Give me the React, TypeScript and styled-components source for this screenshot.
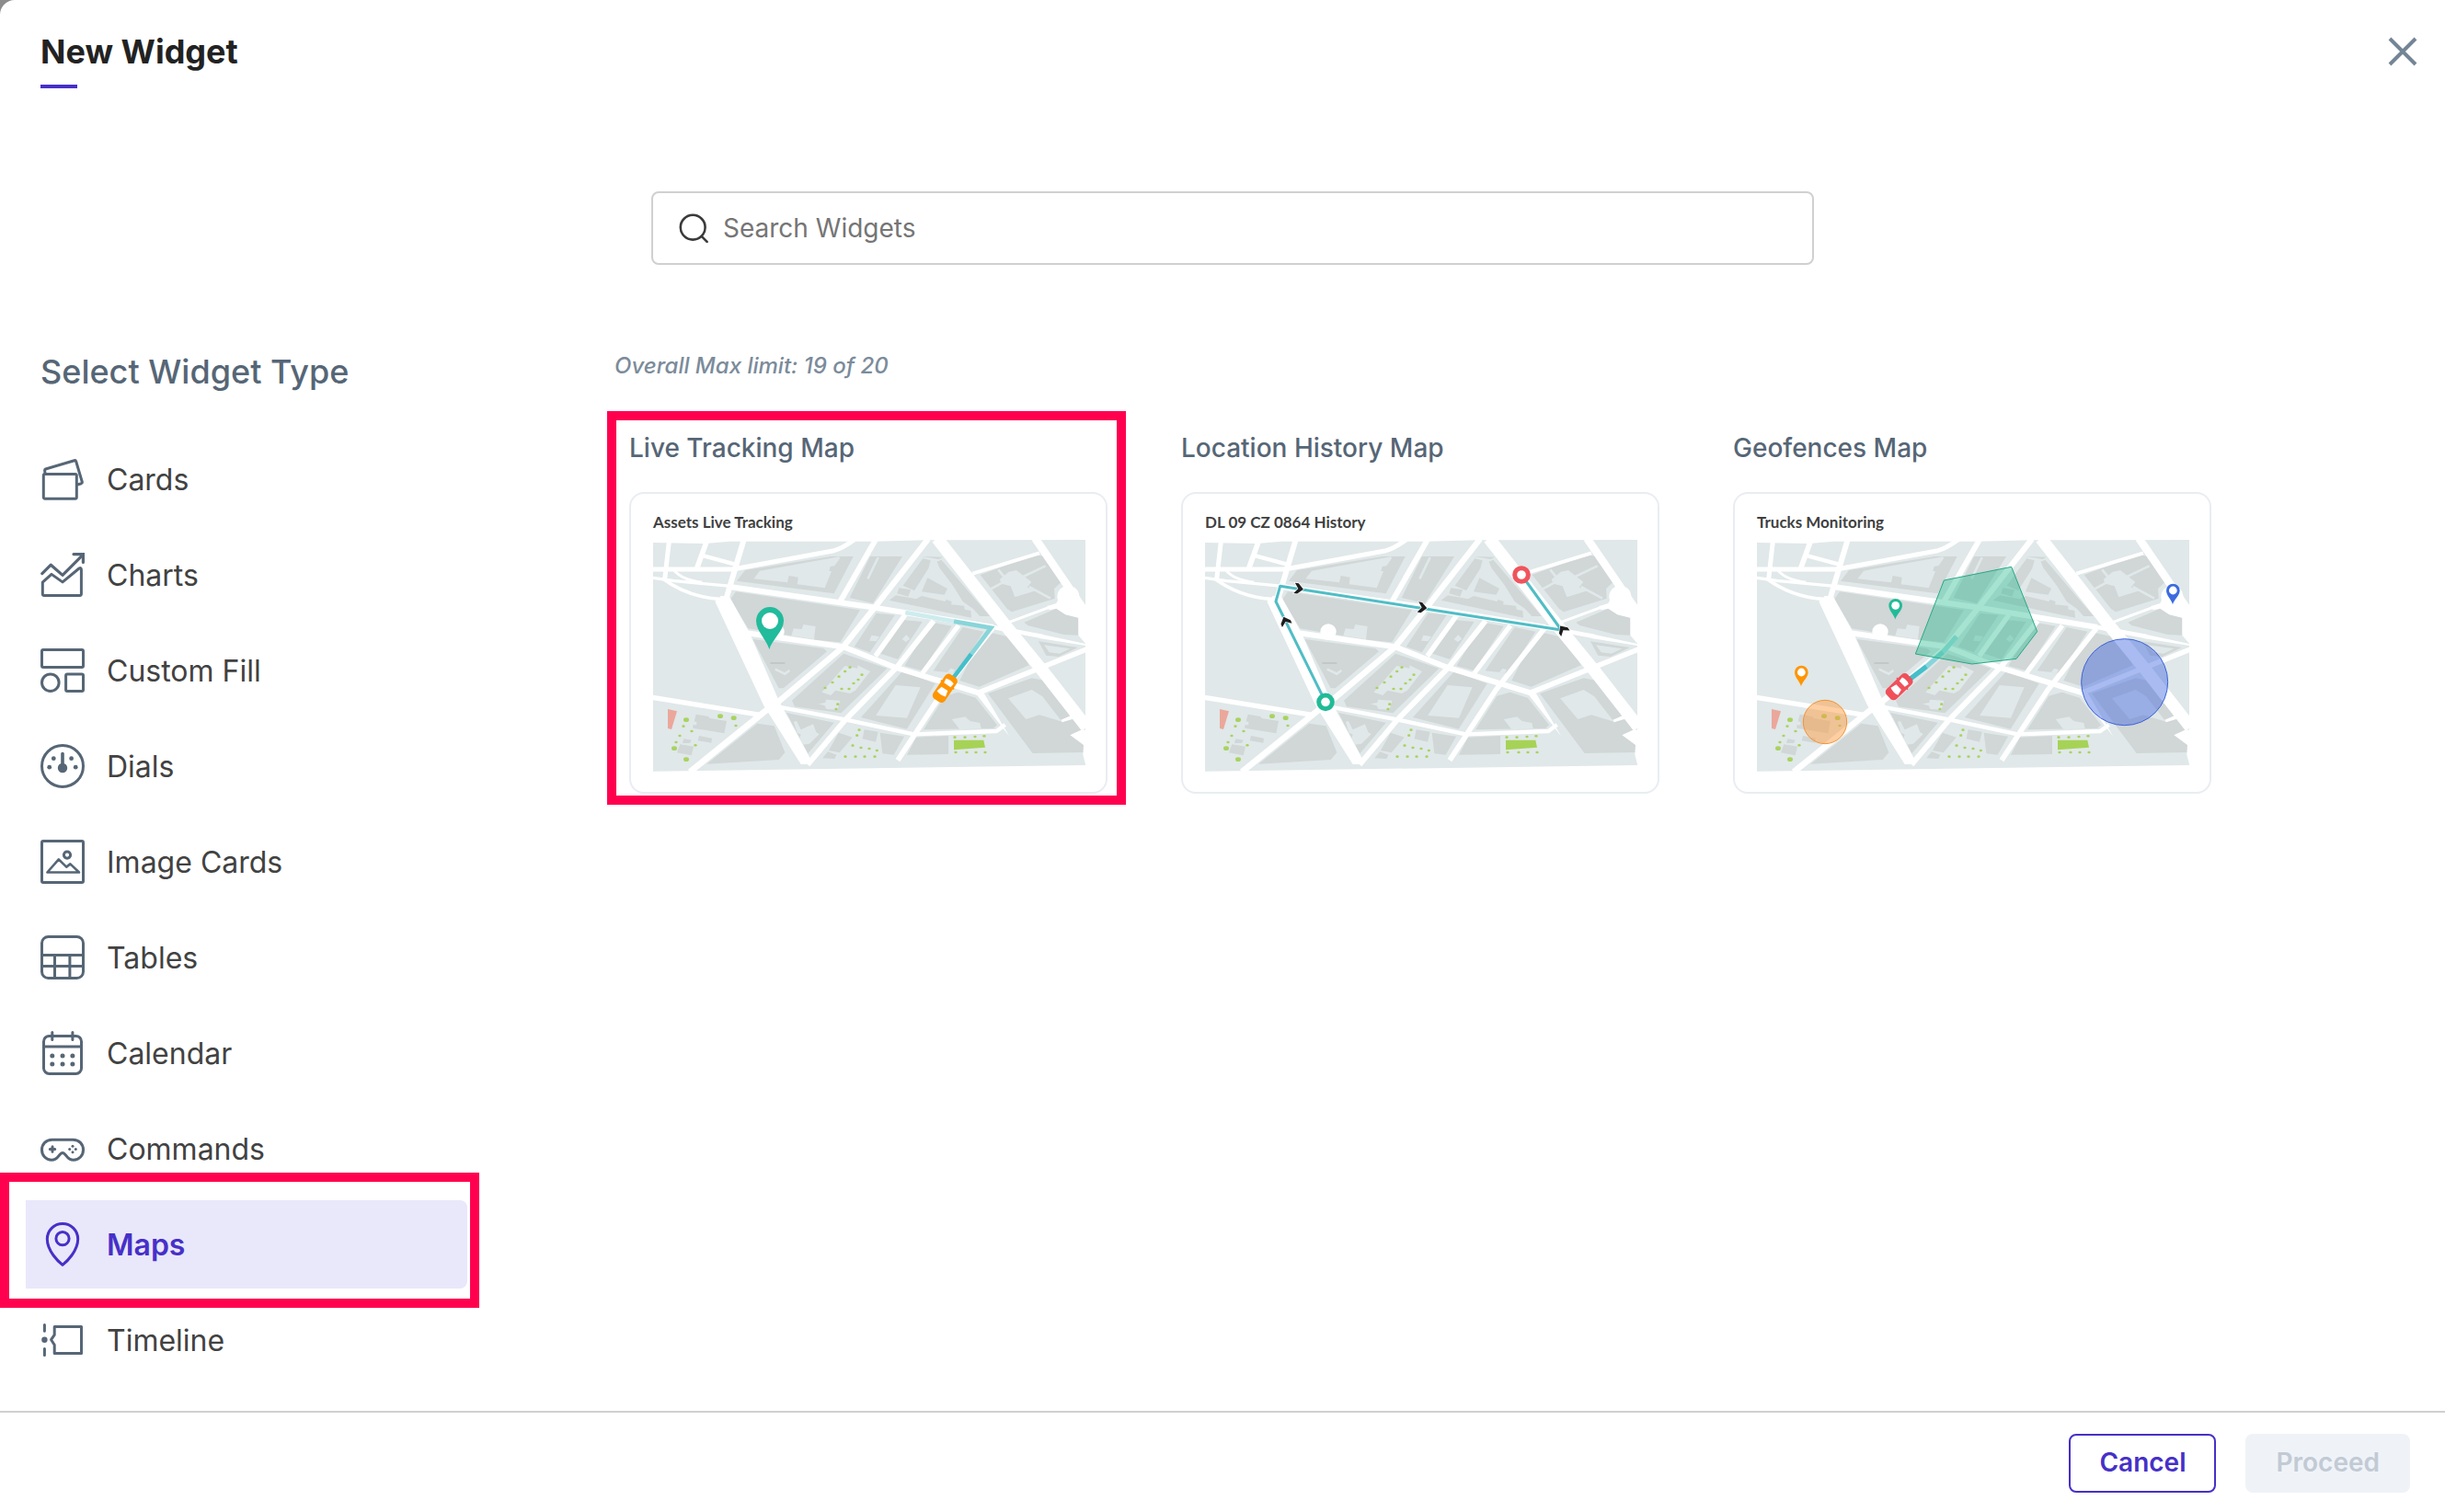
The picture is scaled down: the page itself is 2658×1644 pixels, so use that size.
import React, { ReactNode, useState } from "react";
import styled, { createGlobalStyle, css } from "styled-components";

const color = {
  ink: "#222222",
  text: "#424242",
  slate: "#566676",
  muted: "#7b8b9a",
  line: "#d0d0d0",
  cardLine: "#e9edf2",
  brand: "#4630c8",
  brandSoft: "#e9e7fa",
  mark: "#ff004f",
};

const GlobalStyle = createGlobalStyle`
  *, *::before, *::after { box-sizing: border-box; }
  body {
    margin: 0;
    background: #8c8c8c;
    font-family: Inter, "Liberation Sans", sans-serif;
    color: ${color.text};
  }
  button, input { font-family: inherit; }
`;

/* ---------- layout ---------- */

const Dialog = styled.div`
  display: flex;
  flex-direction: column;
  min-height: 100vh;
  background: #ffffff;
  border-top-left-radius: 16px;
`;

const Header = styled.header`
  display: flex;
  justify-content: space-between;
  align-items: flex-start;
  padding: 34px 28px 0 44px;
`;

const Title = styled.h1`
  margin: 0;
  font-size: 36px;
  line-height: 44px;
  font-weight: 700;
  color: ${color.ink};

  &::after {
    content: "";
    display: block;
    width: 40px;
    height: 4px;
    margin-top: 14px;
    background: ${color.brand};
  }
`;

const CloseButton = styled.button`
  display: flex;
  padding: 4px 0;
  border: 0;
  background: none;
  color: #748596;
  cursor: pointer;
`;

const SearchRow = styled.div`
  display: flex;
  justify-content: center;
  padding: 112px 0 0 22px;
`;

const SearchField = styled.label`
  display: flex;
  align-items: center;
  gap: 16px;
  width: min(1264px, 100%);
  height: 80px;
  padding: 0 28px;
  border: 2px solid ${color.line};
  border-radius: 8px;
  color: #3a3a3a;
`;

const SearchInput = styled.input`
  flex: 1;
  min-width: 0;
  padding: 0;
  border: 0;
  outline: 0;
  background: none;
  font-size: 28px;
  line-height: 36px;
  color: ${color.text};

  &::placeholder {
    color: #757575;
    opacity: 1;
  }
`;

const Body = styled.div`
  display: grid;
  grid-template-columns: 508px minmax(0, 1fr);
  column-gap: 160px;
  flex: 1;
  padding: 94px 0 28px;
`;

const Aside = styled.aside`
  padding-left: 28px;
`;

const AsideTitle = styled.h2`
  margin: 0 0 47px;
  padding-left: 16px;
  font-size: 36px;
  line-height: 44px;
  font-weight: 500;
  color: ${color.slate};
`;

const TypeList = styled.ul`
  display: flex;
  flex-direction: column;
  gap: 8px;
  margin: 0;
  padding: 0;
  list-style: none;
`;

const TypeEntry = styled.li`
  position: relative;
`;

const TypeButton = styled.button<{ $active: boolean }>`
  display: flex;
  align-items: center;
  gap: 24px;
  width: 100%;
  height: 96px;
  padding: 0 16px;
  border: 0;
  border-radius: 0 8px 8px 0;
  background: none;
  font-size: 32px;
  line-height: 40px;
  font-weight: 400;
  text-align: left;
  color: ${color.text};
  cursor: pointer;

  svg { color: ${color.slate}; }

  ${(p) =>
    p.$active &&
    css`
      background: ${color.brandSoft};
      font-weight: 600;
      color: ${color.brand};
      svg { color: ${color.brand}; }
    `}
`;

const TypeName = styled.span`
  padding-top: 2px;
`;

const Highlight = styled.span<{ $inset: string }>`
  position: absolute;
  inset: ${(p) => p.$inset};
  border: 10px solid ${color.mark};
  pointer-events: none;
`;

const Limit = styled.p`
  margin: 0 0 55px;
  font-size: 24px;
  line-height: 32px;
  font-style: italic;
  font-weight: 500;
  color: ${color.muted};
`;

const WidgetGrid = styled.div`
  display: grid;
  grid-template-columns: repeat(auto-fill, 520px);
  gap: 80px;
  padding-left: 16px;
`;

const Widget = styled.article`
  position: relative;
`;

const WidgetTitle = styled.h3`
  margin: 0 0 30px;
  font-size: 28px;
  line-height: 36px;
  font-weight: 500;
  color: ${color.slate};
`;

const Preview = styled.figure`
  display: flex;
  flex-direction: column;
  gap: 9px;
  margin: 0;
  padding: 21px 22px 22px 24px;
  border: 2px solid ${color.cardLine};
  border-radius: 16px;

  svg { display: block; width: 100%; height: auto; }
`;

const PreviewCaption = styled.figcaption`
  font-family: Lato, "Liberation Sans", sans-serif;
  font-size: 17px;
  line-height: 20px;
  font-weight: 700;
  color: #3f3f3f;
`;

const Footer = styled.footer`
  display: flex;
  justify-content: flex-end;
  gap: 32px;
  padding: 23px 38px 21px;
  border-top: 2px solid ${color.line};
`;

const Button = styled.button`
  height: 64px;
  padding: 0 31px 2px;
  border: 2px solid ${color.brand};
  border-radius: 8px;
  background: #ffffff;
  font-size: 28px;
  line-height: 36px;
  font-weight: 600;
  color: ${color.brand};
  cursor: pointer;

  &:disabled {
    border-color: #eff3f8;
    background: #eff3f8;
    color: #c2cad4;
    cursor: default;
  }
`;

/* ---------- icons ---------- */

const Icon = ({ children }: { children: ReactNode }) => (
  <svg
    width="48"
    height="48"
    viewBox="0 0 48 48"
    fill="none"
    stroke="currentColor"
    strokeWidth="3"
    strokeLinecap="round"
    strokeLinejoin="round"
    aria-hidden="true"
  >
    {children}
  </svg>
);

const Dots = ({ at, r, ry = r, fill = "currentColor" }: { at: number[][]; r: number; ry?: number; fill?: string }) => (
  <g fill={fill} stroke="none">
    {at.map(([x, y]) => (
      <ellipse key={`${x}-${y}`} cx={x} cy={y} rx={r} ry={ry} />
    ))}
  </g>
);

const icons: Record<string, ReactNode> = {
  Cards: (
    <>
      <rect x="3.3" y="18.6" width="36" height="26.6" rx="1.5" />
      <path d="M5 17.5 4.6 14.4Q4.6 13.3 5.6 13L36.8 3.7Q38.3 3.3 38.7 4.8L45.3 27Q45.6 28.3 44.4 28.7L40 30" />
    </>
  ),
  Charts: (
    <>
      <path d="M1.8 22.6 11.3 13.2 24 24.4 45.5 2.8" strokeWidth="3.2" />
      <path d="M36 1.6H46.4V10.5" strokeWidth="3.2" strokeLinejoin="miter" />
      <path d="M2.3 32.2 12 23.4 24 31.9 42 17Q44.4 15.8 44.4 18.4V44.8Q44.4 46.4 42.8 46.4H3.9Q2.3 46.4 2.3 44.8Z" />
    </>
  ),
  "Custom Fill": (
    <>
      <rect x="1.5" y="1.5" width="45" height="19" rx="1.5" />
      <circle cx="10.8" cy="37.2" r="9.3" />
      <rect x="27.6" y="28" width="18.9" height="18.5" rx="1.5" />
    </>
  ),
  Dials: (
    <>
      <circle cx="24" cy="24" r="22.5" />
      <path d="M24 10.6V24" strokeWidth="3.6" />
      <Dots at={[[24, 26]]} r={5.2} />
      <Dots at={[[14.3, 15.7], [33.6, 15.7], [9.7, 25.2], [38.2, 25.2]]} r={2.4} />
    </>
  ),
  "Image Cards": (
    <>
      <rect x="1.5" y="1.5" width="45" height="45" rx="1.5" />
      <path d="M7.4 35.5 19.8 21.4 28.2 29.6 32.4 26.4 42 35.5Z" strokeWidth="2.6" />
      <circle cx="29" cy="16.6" r="3.6" />
    </>
  ),
  Tables: (
    <>
      <rect x="1.5" y="1.5" width="45" height="45" rx="7" />
      <path d="M1.5 21.4H46.5M1.5 33.4H46.5M15.5 21.4V46M31.9 21.4V46" />
    </>
  ),
  Calendar: (
    <>
      <rect x="3.5" y="5.4" width="41" height="41" rx="6" />
      <path d="M3.5 17H44.5M12.8 1.5V9.6M34.9 1.5V9.6" />
      <Dots at={[[12.8, 27], [24, 27], [34.9, 27], [12.8, 36], [24, 36], [34.9, 36]]} r={2.5} />
    </>
  ),
  Commands: (
    <>
      <path d="M12.5 14.2H35.5C42 14.2 46.5 19 46.5 25.2S42 36.2 36 36.2C32.4 36.2 30 34.4 28 31.6 26.6 29.6 25.4 28.4 24 28.4S21.4 29.6 20 31.6C18 34.4 15.6 36.2 12 36.2 6 36.2 1.5 31.4 1.5 25.2S6 14.2 12.5 14.2Z" />
      <path d="M13 21.8V27.2M10.3 24.5H15.7" strokeWidth="3" />
      <Dots at={[[35, 21.2], [35, 27.8], [31.7, 24.5], [38.3, 24.5]]} r={1.5} />
    </>
  ),
  Maps: (
    <>
      <path d="M24 46.4C19.8 43 7.3 31.4 7.3 18.3 7.3 8.8 14.8 1.5 24 1.5S40.7 8.8 40.7 18.3C40.7 31.4 28.2 43 24 46.4Z" />
      <circle cx="24" cy="17.7" r="7.1" />
    </>
  ),
  Timeline: (
    <>
      <path d="M4.4 7.5V14.2M4.4 33.6V40.6" />
      <Dots at={[[4.4, 23.7]]} r={3.2} />
      <path d="M15.2 9.4H44.5V38.4H15.2V29.2L11.6 23.7 15.2 18.4Z" />
    </>
  ),
};

const SearchIcon = () => (
  <svg width="32" height="32" viewBox="0 0 32 32" fill="none" stroke="currentColor" strokeWidth="2.6" aria-hidden="true">
    <circle cx="15.2" cy="15.2" r="13.4" />
    <path d="M24.6 24.8 30.6 30.8" strokeLinecap="round" />
  </svg>
);

const CloseIcon = () => (
  <svg width="36" height="36" viewBox="0 0 36 36" fill="none" stroke="currentColor" strokeWidth="4" aria-hidden="true">
    <path d="M4 4 32 32M32 4 4 32" />
  </svg>
);

/* ---------- map drawing ---------- */

const land = "#e0e8e9";
const block = "#d1d6d6";
const leaf = "#a8d35f";

const blocks = [
  "303,155 330,120 610,75 683,75 620,196",
  "738,75 843,75 747,228 671,210",
  "300,190 705,250 640,355 560,347 340,310 282,215",
  "355,345 585,375 597,385 455,505 440,505",
  "651,392 793,440 643,586 492,565 483,545",
  "370,620 425,628 460,715 440,738 205,752",
  "465,585 620,617 535,718",
  "635,650 680,665 638,715 603,708",
  "600,712 628,722 622,735 583,733",
  "719,640 764,647 756,680 713,670",
  "770,650 849,662 815,722 778,718",
  "888,665 993,660 993,720 858,722",
  "170,590 210,597 215,603 270,612 262,652 160,635 160,625 172,625 172,615 164,613",
  "180,660 222,668 220,683 176,676",
  "130,670 155,674 150,684 126,684",
  "118,688 162,695 155,724 108,715",
  "908,75 975,77 962,84",
  "910,82 935,88 928,114 882,186 845,170",
  "832,178 870,184 862,206 826,196",
  "925,145 990,180 980,200 906,190",
  "970,86 1128,270 1096,270 1074,246 1040,222 1008,170 964,112 956,92",
  "800,218 822,202 888,214 906,204 982,222 986,216 1004,222 1002,232 1044,236 1046,248 1066,252 1068,275",
  "1097,135 1275,70 1305,75 1360,160 1338,180 1340,212 1200,256 1185,246",
  "1240,290 1345,245 1375,265 1417,275 1417,332 1370,330 1252,300",
  "1287,352 1415,372 1352,402 1312,398",
  "1135,325 1210,342 1256,430 1094,500 1030,480 1070,400",
  "758,260 818,266 737,388 686,370",
  "850,283 908,288 828,410 772,392",
  "936,290 1004,302 908,448 850,432",
  "1040,306 1108,320 1020,456 944,448",
  "843,450 950,490 857,638 708,600",
  "1025,518 1082,536 1152,625 1140,636 912,640 982,530",
  "1122,522 1265,472 1308,480 1400,600 1428,642 1395,655 1436,692 1436,714 1268,717",
];

const clearings = [
  "358,148 378,122 636,76 640,80 622,106 608,108 604,122 612,124 590,178 500,166 503,143 473,138 468,160",
  "481,334 488,310 515,312 520,297 560,303 555,346",
  "655,432 697,440 697,430 738,450 690,512 672,522 625,512 610,528 580,518",
  "569,556 592,552 594,542 640,545 632,575 595,573 590,562",
  "488,614 498,612 512,640 552,622 562,648 572,655 540,686 515,690 503,680 512,656 500,650",
  "1160,150 1190,125 1215,120 1264,158 1250,176 1280,186 1210,208 1196,172 1166,164",
  "1305,364 1390,376 1356,392 1322,388",
  "821,495 902,502 858,602 756,594",
  "1004,606 1048,598 1064,612 1096,618 1100,636 1030,640",
  "1188,538 1265,510 1300,532 1350,596 1364,614 1290,592 1246,606",
  "735,350 742,332 768,336 758,352",
  "842,345 856,330 868,344 854,354",
  "990,452 1000,440 1014,444 1008,456",
];

const passages = [
  "M764 78 730 148",
  "M428 443 460 458 475 447",
  "M1156 118 1178 146",
  "M1218 150 1310 106",
  "M1256 174 1326 212",
  "M1130 182 1170 160",
];

const roads: [string, number][] = [
  ["M30 117H290L620 56Q645 50 690 18", 15],
  ["M82 26 68 150", 15],
  ["M204 28 172 116", 17],
  ["M326 20 268 214", 18],
  ["M195 73 295 100", 13],
  ["M30 145 100 155 285 172", 10],
  ["M285 175 740 240 1140 306", 18],
  ["M1140 306 1300 336", 14],
  ["M60 146Q140 206 245 214", 11],
  ["M97 118Q120 150 190 160", 9],
  ["M757 18 640 222", 18],
  ["M927 18 750 245 650 370 435 552", 19],
  ["M956 16 1175 295 1300 448 1444 632", 40],
  ["M1072 131 1290 64", 12],
  ["M1276 16 1444 262", 26],
  ["M1190 290 1330 238", 9],
  ["M1090 520 1444 378", 17],
  ["M335 325 650 370 820 437 1092 520", 18],
  ["M28 535 380 592", 16],
  ["M420 560 150 778", 20],
  ["M440 566 660 608 880 655 1150 645 1178 624", 13],
  ["M945 285 826 435 655 610 534 754", 18],
  ["M1026 300 908 456", 16],
  ["M852 265 755 400", 16],
  ["M1137 310 979 510 828 740", 17],
];

const BaseMap = () => (
  <>
    <polygon points="30,30 200,33 280,26 750,26 920,22 1440,21 1440,756 30,776" fill={land} />
    {blocks.map((p) => (
      <polygon key={p} points={p} fill={block} />
    ))}
    {clearings.map((p) => (
      <polygon key={p} points={p} fill={land} />
    ))}
    {passages.map((d) => (
      <path key={d} d={d} fill="none" stroke={land} strokeWidth="8" />
    ))}
    <path d="M412 423H460" stroke="#c0c5c5" strokeWidth="5" />
    <circle cx="1388" cy="206" r="46" fill={land} />
    <g fill="none" stroke="#ffffff" strokeLinejoin="round">
      {roads.map(([d, w]) => (
        <path key={d} d={d} strokeWidth={w} />
      ))}
    </g>
    <g fill="#ffffff">
      <polygon points="232,222 252,203 280,208 345,325 440,545 550,748 535,753 512,753 390,560" />
      <polygon points="1290,328 1440,360 1440,366 1290,342" />
      <polygon points="1085,526 1105,514 1192,662" />
      <polygon points="1372,170 1400,180 1444,240 1444,364 1417,332 1417,275 1375,265 1345,245 1322,250 1314,238 1345,228" />
      <circle cx="1384" cy="206" r="36" />
      <polygon points="1360,608 1398,592 1410,602 1364,616" />
      <polygon points="1444,640 1424,642 1390,658 1434,690 1432,722 1442,760" />
      <circle cx="432" cy="321" r="26" />
    </g>
    <polygon points="78,573 108,580 90,639 78,636" fill="#eba79b" />
    <Dots fill={leaf} r={9} ry={7} at={[[138, 608], [249, 596], [293, 602], [99, 701], [138, 737]]} />
    <Dots
      fill={leaf}
      r={5}
      ry={4}
      at={[
        [129, 629], [156, 645], [117, 660], [105, 681], [168, 691], [300, 627],
        [672, 437], [656, 450], [711, 461], [636, 467], [699, 477], [615, 486],
        [684, 489], [591, 504], [645, 507], [669, 507], [632, 557], [627, 573],
        [702, 641], [695, 659], [681, 692], [708, 699], [735, 702], [760, 708],
        [657, 728], [690, 728], [720, 728], [753, 728],
        [1014, 665], [1047, 665], [1080, 663], [1110, 661],
        [1017, 714], [1053, 714], [1083, 714], [1113, 714],
      ]}
    />
    <polygon points="1011,674 1108,674 1113,698 1011,706" fill="#a6d356" />
  </>
);

const Pin = ({ x, y, r, fill }: { x: number; y: number; r: number; fill: string }) => (
  <g transform={`translate(${x} ${y}) scale(${r / 45})`}>
    <path d="M-2 93C-10 62-45 34-45 0A45 45 0 0 1 45 0C45 34 6 62-2 93Z" fill={fill} />
    <circle r="27" fill="#ffffff" />
  </g>
);

const Car = ({ x, y, turn, fill }: { x: number; y: number; turn: number; fill: string }) => (
  <g transform={`translate(${x} ${y}) rotate(${turn})`}>
    <rect x="-23" y="-48" width="46" height="96" rx="14" fill={fill} />
    <path d="M-26-14H26" stroke={fill} strokeWidth="5" />
    <path d="M-15-28Q0-34 15-28L13-13H-13Z" fill="#ffffff" />
    <path d="M-12 2H12L17 22Q0 28-17 22Z" fill="#ffffff" />
  </g>
);

const Chevron = ({ x, y, turn }: { x: number; y: number; turn: number }) => (
  <path
    transform={`translate(${x} ${y}) rotate(${turn})`}
    d="M-15-17H-3L15 0-3 17H-15L-2 0Z"
    fill="#1e1e1e"
    stroke="#ffffff"
    strokeWidth="4"
    paintOrder="stroke"
  />
);

const LiveTracking = () => (
  <>
    <g fill="none" strokeWidth="14">
      <path d="M853 258 1011 287" stroke="#cdecee" />
      <path d="M1011 287 1132 308 1068 393" stroke="#88d5d9" />
      <path d="M1068 393 1008 472" stroke="#45bfc9" />
    </g>
    <Car x={982} y={505} turn={34} fill="#ff9500" />
    <Pin x={411} y={285} r={45} fill="#22bb9c" />
  </>
);

const History = () => (
  <>
    <g fill="none" strokeLinejoin="round">
      <path d="M423 550 261 222 275 172 1192 315 1062 135" stroke="#ffffff" strokeWidth="15" />
      <path d="M423 550 261 222 275 172 1192 315 1062 135" stroke="#50bdc5" strokeWidth="9" />
    </g>
    <Chevron x={336} y={180} turn={8} />
    <Chevron x={739} y={242} turn={8} />
    <Chevron x={292} y={286} turn={-112} />
    <Chevron x={1197} y={314} turn={-125} />
    <circle cx="423" cy="550" r="22" fill="#ffffff" stroke="#22bb97" strokeWidth="15" />
    <circle cx="1062" cy="135" r="22" fill="#ffffff" stroke="#f0545c" strokeWidth="15" />
  </>
);

const Geofences = () => (
  <>
    <g fill="none" strokeWidth="16">
      <path d="M681 336 637 386" stroke="#a8e2e4" />
      <path d="M637 386 583 434" stroke="#88d5d9" />
      <path d="M583 434 528 476" stroke="#45bfc9" />
    </g>
    <Car x={494} y={500} turn={46} fill="#f0505a" />
    <g strokeWidth="3">
      <polygon points="640,153 860,109 944,320 876,409 731,426 547,393" fill="#22b88c" fillOpacity="0.4" stroke="#26a985" />
      <circle cx="1229" cy="485" r="141" fill="#4169e1" fillOpacity="0.45" stroke="#3c62d8" />
      <circle cx="252" cy="615" r="71" fill="#ff9a3c" fillOpacity="0.48" stroke="#f59331" />
    </g>
    <Pin x={482} y={235} r={22} fill="#22bb97" />
    <Pin x={1387} y={186} r={22} fill="#3c6be0" />
    <Pin x={175} y={453} r={22} fill="#ff9500" />
  </>
);

/* ---------- content ---------- */

const types = [
  "Cards",
  "Charts",
  "Custom Fill",
  "Dials",
  "Image Cards",
  "Tables",
  "Calendar",
  "Commands",
  "Maps",
  "Timeline",
];

const widgets = [
  { title: "Live Tracking Map", caption: "Assets Live Tracking", Layer: LiveTracking, marked: true },
  { title: "Location History Map", caption: "DL 09 CZ 0864 History", Layer: History, marked: false },
  { title: "Geofences Map", caption: "Trucks Monitoring", Layer: Geofences, marked: false },
];

export default function App() {
  const [active, setActive] = useState("Maps");
  const [query, setQuery] = useState("");

  return (
    <>
      <GlobalStyle />
      <Dialog role="dialog" aria-labelledby="dialog-title">
        <Header>
          <Title id="dialog-title">New Widget</Title>
          <CloseButton type="button" aria-label="Close">
            <CloseIcon />
          </CloseButton>
        </Header>

        <SearchRow>
          <SearchField>
            <SearchIcon />
            <SearchInput
              type="text"
              aria-label="Search Widgets"
              placeholder="Search Widgets"
              value={query}
              onChange={(e) => setQuery(e.target.value)}
            />
          </SearchField>
        </SearchRow>

        <Body>
          <Aside>
            <AsideTitle>Select Widget Type</AsideTitle>
            <TypeList>
              {types.map((name) => (
                <TypeEntry key={name}>
                  <TypeButton type="button" $active={name === active} onClick={() => setActive(name)}>
                    <Icon>{icons[name]}</Icon>
                    <TypeName>{name}</TypeName>
                  </TypeButton>
                  {name === "Maps" && <Highlight $inset="-30px -13px -21px -28px" />}
                </TypeEntry>
              ))}
            </TypeList>
          </Aside>

          <main>
            <Limit>Overall Max limit: 19 of 20</Limit>
            <WidgetGrid>
              {widgets.map(({ title, caption, Layer, marked }) => (
                <Widget key={title}>
                  <WidgetTitle>{title}</WidgetTitle>
                  <Preview>
                    <PreviewCaption>{caption}</PreviewCaption>
                    <svg viewBox="30 21 1410 756" aria-hidden="true">
                      <BaseMap />
                      <Layer />
                    </svg>
                  </Preview>
                  {marked && <Highlight $inset="-22px -20px -12px -24px" />}
                </Widget>
              ))}
            </WidgetGrid>
          </main>
        </Body>

        <Footer>
          <Button type="button">Cancel</Button>
          <Button type="button" disabled>
            Proceed
          </Button>
        </Footer>
      </Dialog>
    </>
  );
}
